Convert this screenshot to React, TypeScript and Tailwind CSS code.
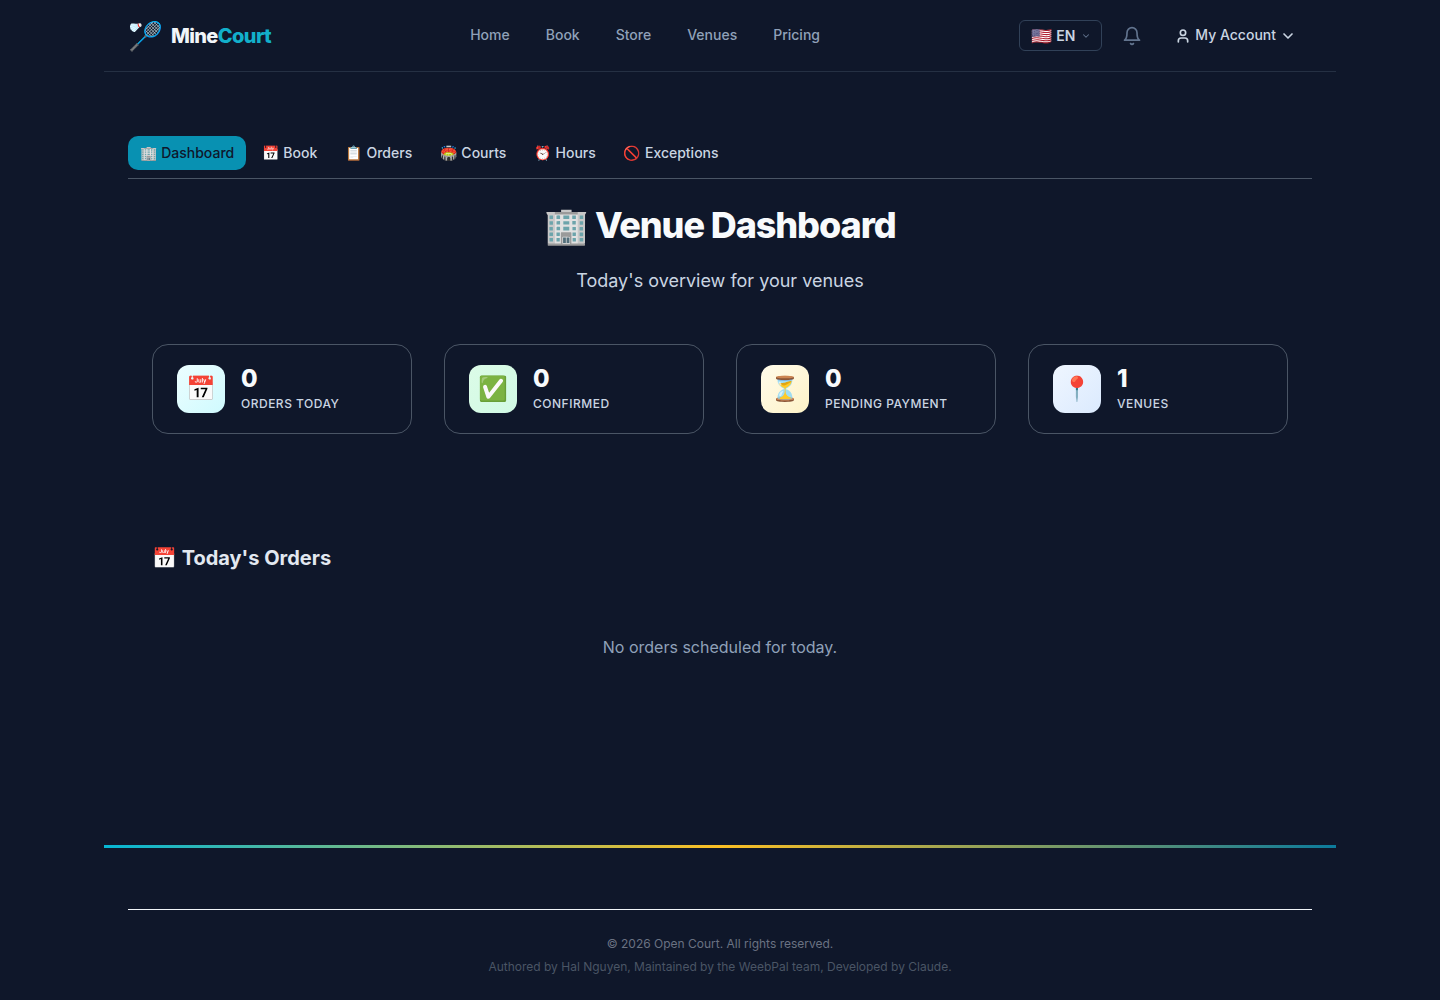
import { useState } from "react";
import { ChevronDown, User } from "lucide-react";

const NAV_LINKS = ["Home", "Book", "Store", "Venues", "Pricing"];

const TABS = [
  { id: "dashboard", icon: "🏢", label: "Dashboard" },
  { id: "book", icon: "📅", label: "Book" },
  { id: "orders", icon: "📋", label: "Orders" },
  { id: "courts", icon: "🏟️", label: "Courts" },
  { id: "hours", icon: "⏰", label: "Hours" },
  { id: "exceptions", icon: "🚫", label: "Exceptions" },
];

const STATS = [
  { icon: "📅", value: 0, label: "Orders Today", bg: "from-[#ecfeff] to-[#cffafe]" },
  { icon: "✅", value: 0, label: "Confirmed", bg: "from-[#dcfce7] to-[#d1fae5]" },
  { icon: "⏳", value: 0, label: "Pending Payment", bg: "from-[#fffbeb] to-[#fef3c7]" },
  { icon: "📍", value: 1, label: "Venues", bg: "from-[#eff6ff] to-[#dbeafe]" },
];

function BellIcon() {
  return (
    <svg width="20" height="20" viewBox="0 0 24 24" fill="none" stroke="currentColor" strokeWidth="2" strokeLinecap="round" strokeLinejoin="round">
      <path d="M18 8A6 6 0 0 0 6 8c0 7-3 9-3 9h18s-3-2-3-9" />
      <path d="M13.73 21a2 2 0 0 1-3.46 0" />
    </svg>
  );
}

function Header() {
  return (
    <header className="flex h-18 items-center justify-between border-b border-[#253043] px-6">
      <a href="#" className="flex items-center gap-2">
        <span className="text-[28px] leading-8">🏸</span>
        <span className="text-xl font-extrabold tracking-[-0.03em] text-slate-100">
          Mine<span className="text-[#12b0cb]">Court</span>
        </span>
      </a>

      <nav className="hidden items-center gap-9 pb-0.5 md:flex">
        {NAV_LINKS.map((link) => (
          <a key={link} href="#" className="text-sm font-medium text-slate-400 hover:text-slate-200">
            {link}
          </a>
        ))}
      </nav>

      <div className="flex items-center">
        <button
          type="button"
          aria-haspopup="listbox"
          className="flex h-[31px] items-center gap-1 rounded-md border border-slate-700 pr-2.5 pl-[11px] text-sm font-semibold text-slate-300"
        >
          <span className="text-[17px] leading-5">🇺🇸</span>
          EN
          <ChevronDown size={10} className="ml-0.5 text-slate-500" strokeWidth={2.5} />
        </button>
        <button type="button" aria-label="Notifications" className="ml-2.5 p-2.5 text-slate-500">
          <BellIcon />
        </button>
        <button
          type="button"
          aria-haspopup="menu"
          className="ml-[7px] flex items-center gap-1 px-4 text-sm font-medium text-slate-300"
        >
          <User size={16} strokeWidth={2.5} />
          <span className="pb-0.5">My Account</span>
          <ChevronDown size={16} strokeWidth={2.5} />
        </button>
      </div>
    </header>
  );
}

export default function App() {
  const [activeTab, setActiveTab] = useState("dashboard");

  return (
    <div className="min-h-screen bg-[#0f172a] font-['Inter','Noto_Color_Emoji',sans-serif] text-slate-300">
      <div className="mx-auto max-w-[1232px]">
        <Header />

        <main className="px-6 pt-16">
          <div className="flex flex-wrap gap-1 border-b border-gray-600 pb-2">
            {TABS.map((tab) => (
              <button
                key={tab.id}
                type="button"
                onClick={() => setActiveTab(tab.id)}
                className={
                  "rounded-[10px] px-3 py-2 text-sm leading-[18px] font-medium " +
                  (activeTab === tab.id ? "bg-[#0891b2] text-slate-900" : "text-slate-300")
                }
              >
                {tab.icon} {tab.label}
              </button>
            ))}
          </div>

          <div className="px-6">
            <div className="pt-6 text-center">
              <h1 className="text-4xl leading-[44px] font-extrabold tracking-[-0.03em] text-slate-50">
                🏢 Venue Dashboard
              </h1>
              <p className="mt-5 text-lg leading-7 text-slate-300">Today's overview for your venues</p>
            </div>

            <div className="mt-[49px] grid gap-8 sm:grid-cols-2 lg:grid-cols-4">
              {STATS.map((stat) => (
                <div
                  key={stat.label}
                  className="flex items-center gap-4 rounded-2xl border border-gray-600 px-6 py-5"
                >
                  <div className={"flex size-12 shrink-0 items-center justify-center rounded-xl bg-linear-135 text-2xl " + stat.bg}>
                    {stat.icon}
                  </div>
                  <div>
                    <div className="text-2xl leading-7 font-extrabold text-slate-50">{stat.value}</div>
                    <div className="mt-0.5 text-xs leading-[18px] font-medium tracking-[0.5px] text-slate-300 uppercase">
                      {stat.label}
                    </div>
                  </div>
                </div>
              ))}
            </div>

            <section className="pt-28">
              <h2 className="text-xl leading-6 font-bold text-slate-200">📅 Today's Orders</h2>
              <p className="py-16 text-center text-base leading-[26px] text-slate-400">
                No orders scheduled for today.
              </p>
            </section>
          </div>
        </main>

        <footer className="mt-[121px]">
          <div className="h-[3px] bg-[linear-gradient(90deg,#06b6d4,#fbbf24,#0c7b9c)]" />
          <div className="px-6 pt-[61px]">
            <div className="border-t border-slate-100 pt-6 pb-6 text-center text-xs">
              <p className="leading-5 text-gray-500">© 2026 Open Court. All rights reserved.</p>
              <p className="mt-1 leading-[18px] text-gray-600">
                Authored by Hal Nguyen, Maintained by the WeebPal team, Developed by Claude.
              </p>
            </div>
          </div>
        </footer>
      </div>
    </div>
  );
}
